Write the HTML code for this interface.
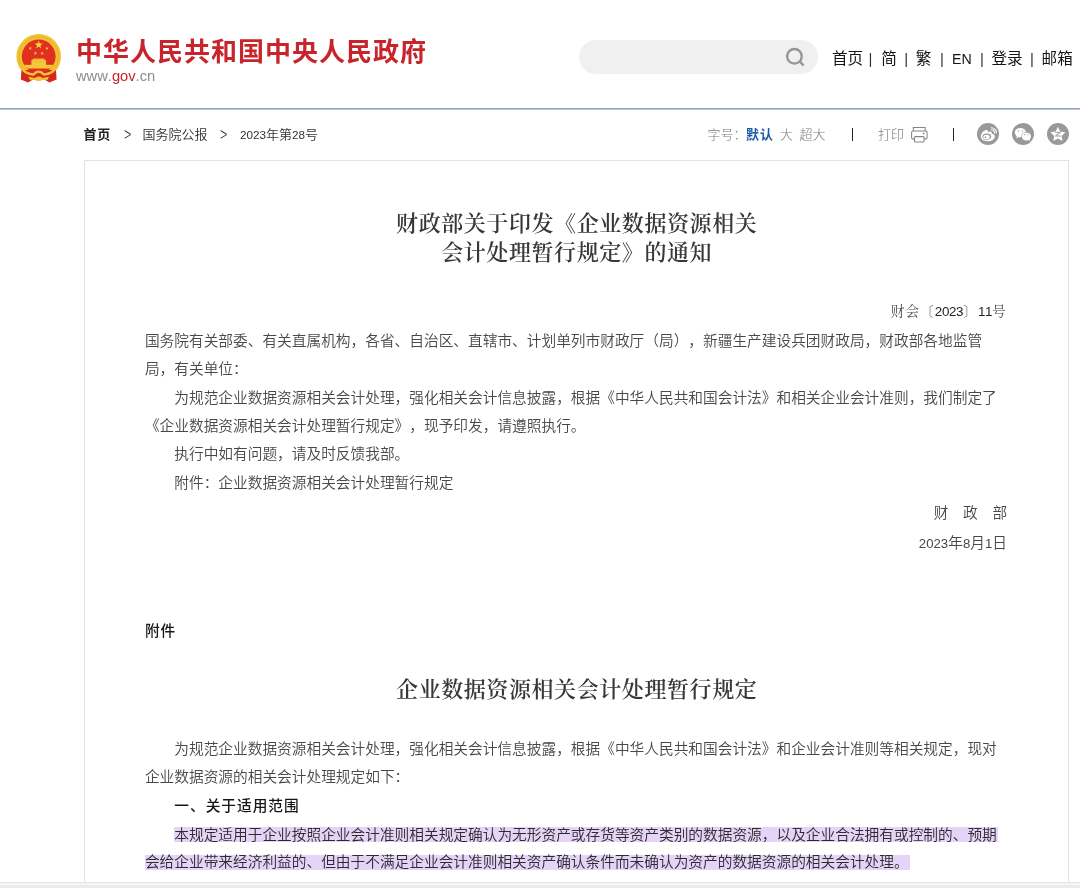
<!DOCTYPE html>
<html lang="zh-CN">
<head>
<meta charset="utf-8">
<title>财政部关于印发《企业数据资源相关会计处理暂行规定》的通知</title>
<style>
html,body{margin:0;padding:0;}
body{width:1080px;height:888px;overflow:hidden;background:#fff;position:relative;
  font-family:"Liberation Sans","Noto Sans CJK SC",sans-serif;color:#333;text-spacing-trim:space-all;font-kerning:none;}
#wrap{position:absolute;left:0;top:0;width:1080px;height:888px;will-change:transform;}
.abs{position:absolute;white-space:nowrap;}
/* header */
#hline{left:0;top:108px;width:1080px;height:2px;background:linear-gradient(#8ba2be 0,#8ba2be 50%,#bccadb 50%,#bccadb 100%);}
#logo{left:16px;top:34px;width:46px;height:50px;}
#sitename{left:76px;top:33px;font-size:26px;line-height:38px;font-weight:bold;color:#c8242b;letter-spacing:1px;}
#siteurl{left:76px;top:66px;font-size:14.7px;line-height:20px;color:#8c8c8c;}
#siteurl b{color:#c8242b;font-weight:normal;}
#search{left:579px;top:40px;width:239px;height:34px;border-radius:17px;background:#f0f0f0;}
#mag{left:784px;top:45px;width:24px;height:24px;}
.nav{top:48.4px;font-size:15.6px;line-height:22px;color:#151515;}
.sep{top:47.6px;font-size:15px;line-height:22px;color:#333;}
/* crumbs */
.crumb{top:126px;font-size:13px;line-height:18px;color:#333;font-weight:350;}
.d{font-size:11.7px;}
.gt{display:inline-block;transform:scale(0.62,1);transform-origin:50% 50%;font-weight:300;font-size:21px;line-height:18px;vertical-align:top;position:relative;top:-1.6px;font-family:"Noto Sans CJK SC",sans-serif;}
.tool{top:126px;font-size:13px;line-height:18px;color:#7a7a7a;font-weight:300;}
.vbar{top:128px;width:1px;height:13px;background:#222;}
.share{top:123px;width:22px;height:22px;}
/* article */
#box{left:84px;top:160px;width:983px;height:740px;border:1px solid #e2e2e2;background:#fff;}
.h1{font-family:"Liberation Serif","Noto Serif CJK SC",serif;font-weight:600;font-size:22px;line-height:30px;color:#383838;
  left:145.2px;width:863px;text-align:center;letter-spacing:0.58px;}
.ln{left:144.9px;width:863.6px;font-size:14.705px;line-height:28px;color:#484848;font-weight:350;}
.ln .n{font-size:13.2px;}
.ln .m{font-size:13.4px;letter-spacing:-0.35px;color:#222;}
.ln.r{text-align:right;}
.ln.i{text-indent:29.41px;}
.ln b{font-weight:500;letter-spacing:0.98px;color:#161616;}
.hl{background:#e6d3f8;height:14.8px;}
#strip{left:0;top:881.5px;width:1080px;height:7px;background:linear-gradient(#e3e3e3 0,#e3e3e3 1.3px,#f5f5f5 1.3px,#f3f4f5 3px,#eaecee 3.4px,#e9ebed 7px);}
</style>
</head>
<body>
<div id="wrap">
<!-- header -->
<svg id="logo" class="abs" viewBox="0 0 46 50">
  <defs><clipPath id="cin"><circle cx="22.7" cy="22.4" r="16.9"/></clipPath>
  <clipPath id="ctop"><rect x="0" y="0" width="46" height="36"/></clipPath></defs>
  <path d="M5.6 33 L39.8 33 L40.6 45.6 L33.4 48.6 L28 45.2 L22.7 46.6 L17.4 45.2 L12 48.6 L4.8 45.6Z" fill="#d8281c"/>
  <circle cx="22.7" cy="22.4" r="22.3" fill="#f2c233" clip-path="url(#ctop)"/>
  <circle cx="22.7" cy="22.4" r="19.6" fill="none" stroke="#e9ab25" stroke-width="0.8" clip-path="url(#ctop)"/>
  <circle cx="22.7" cy="22.4" r="16.9" fill="#e1301f"/>
  <g clip-path="url(#cin)" fill="#f4c838">
    <rect x="4" y="30.8" width="38" height="3.7"/>
    <rect x="15.4" y="27.2" width="14.6" height="3.8"/>
    <path d="M14.6 27.4 L16.6 25.6 L28.8 25.6 L30.8 27.4Z"/>
    <rect x="17" y="24.6" width="11.4" height="1.2"/>
  </g>
  <path d="M5.4 33.2 Q8 39.5 17.5 40.6 Q20 37.6 22.7 37.6 Q25.4 37.6 27.9 40.6 Q37.4 39.5 40 33.2" fill="none" stroke="#f2c233" stroke-width="2.4"/>
  <path d="M12.4 42.8 L19 44 Q22.7 41.2 26.4 44 L33 42.8 L31.4 46 L27 45.4 Q22.7 48.4 18.4 45.4 L14 46Z" fill="#f2c233"/>
  <polygon points="22.70,6.60 23.71,9.51 26.79,9.57 24.34,11.43 25.23,14.38 22.70,12.62 20.17,14.38 21.06,11.43 18.61,9.57 21.69,9.51" fill="#f7d63c"/><polygon points="14.30,12.50 14.72,13.72 16.01,13.74 14.98,14.52 15.36,15.76 14.30,15.02 13.24,15.76 13.62,14.52 12.59,13.74 13.88,13.72" fill="#f7d63c"/><polygon points="31.00,12.50 31.42,13.72 32.71,13.74 31.68,14.52 32.06,15.76 31.00,15.02 29.94,15.76 30.32,14.52 29.29,13.74 30.58,13.72" fill="#f7d63c"/><polygon points="19.40,17.50 19.82,18.72 21.11,18.74 20.08,19.52 20.46,20.76 19.40,20.02 18.34,20.76 18.72,19.52 17.69,18.74 18.98,18.72" fill="#f7d63c"/><polygon points="26.10,17.50 26.52,18.72 27.81,18.74 26.78,19.52 27.16,20.76 26.10,20.02 25.04,20.76 25.42,19.52 24.39,18.74 25.68,18.72" fill="#f7d63c"/>
</svg>
<div id="sitename" class="abs">中华人民共和国中央人民政府</div>
<div id="siteurl" class="abs">www.<b>gov</b>.cn</div>
<div id="search" class="abs"></div>
<svg id="mag" class="abs" viewBox="0 0 24 24"><circle cx="10.45" cy="11.35" r="7.3" fill="none" stroke="#969696" stroke-width="2.4"/><path d="M15.9 16.7 L19 19.8" stroke="#969696" stroke-width="2.4" stroke-linecap="round"/></svg>
<div class="abs nav" style="left:832px">首页</div>
<div class="abs sep" style="left:868.6px">|</div>
<div class="abs nav" style="left:881.3px">简</div>
<div class="abs sep" style="left:904.3px">|</div>
<div class="abs nav" style="left:915.8px">繁</div>
<div class="abs sep" style="left:939.9px">|</div>
<div class="abs nav" style="left:952px;font-size:14.2px">EN</div>
<div class="abs sep" style="left:979.9px">|</div>
<div class="abs nav" style="left:991.4px">登录</div>
<div class="abs sep" style="left:1030.1px">|</div>
<div class="abs nav" style="left:1041.6px">邮箱</div>
<div id="hline" class="abs"></div>

<!-- breadcrumb -->
<div class="abs crumb" style="left:83.5px;font-weight:bold;letter-spacing:0.8px;color:#222">首页</div>
<div class="abs crumb" style="left:121.5px"><span class="gt">&gt;</span></div>
<div class="abs crumb" style="left:142.5px">国务院公报</div>
<div class="abs crumb" style="left:217.7px"><span class="gt">&gt;</span></div>
<div class="abs crumb" style="left:240px"><span class="d">2023</span>年第<span class="d">28</span>号</div>
<div class="abs tool" style="left:707.4px">字号：</div>
<div class="abs tool" style="left:746px;color:#1b58a5;font-weight:bold;letter-spacing:0.9px">默认</div>
<div class="abs tool" style="left:780px">大</div>
<div class="abs tool" style="left:799.5px">超大</div>
<div class="abs vbar" style="left:852px"></div>
<div class="abs tool" style="left:878px">打印</div>
<svg class="abs" style="left:910px;top:126px;width:19px;height:18px" viewBox="0 0 19 18"><g fill="none" stroke="#858585" stroke-width="1.05"><path d="M3.3 5 V1.5 H15.2 V5"/><rect x="1.6" y="4.9" width="15.5" height="8.2" rx="1.6"/><rect x="4.4" y="10.6" width="9.7" height="5.3" rx="1" fill="#fff"/></g><circle cx="13.7" cy="7.4" r="0.85" fill="#777"/></svg>
<div class="abs vbar" style="left:953px"></div>
<svg class="abs share" style="left:977px" viewBox="0 0 22 22"><circle cx="11" cy="11" r="11" fill="#999"/><path d="M10.3 7.1 C8 6 3.8 9.8 3.8 13.5 C3.8 16.4 7 18.2 10.6 18.2 C14.6 18.2 17.8 16 17.8 13.4 C17.8 11.7 16.2 10.7 14.7 10.7 C15.1 9.5 14.6 8.5 13.3 8.5 C12.5 8.5 11.5 8.9 10.9 9.3 C11.1 8.4 10.9 7.5 10.3 7.1Z" fill="#fff"/><ellipse cx="9.8" cy="13.6" rx="4.4" ry="3.1" fill="#999"/><ellipse cx="9.5" cy="13.9" rx="3.2" ry="2.2" fill="#fff"/><ellipse cx="8.7" cy="14.2" rx="1" ry="0.7" fill="#999"/><path d="M14.4 6.7 a3.2 3.2 0 0 1 3.2 3.2" fill="none" stroke="#fff" stroke-width="1.1" stroke-linecap="round"/><path d="M14.2 4.7 a5.2 5.2 0 0 1 5.2 5.2" fill="none" stroke="#fff" stroke-width="1.1" stroke-linecap="round"/></svg>
<svg class="abs share" style="left:1012px" viewBox="0 0 22 22"><circle cx="11" cy="11" r="11" fill="#999"/><ellipse cx="8.4" cy="9.6" rx="5.6" ry="4.7" fill="#fff"/><path d="M5 12.6 L4.4 15.2 L7.8 13.8Z" fill="#fff"/><ellipse cx="14.4" cy="13.4" rx="5" ry="4.4" fill="#999"/><ellipse cx="14.4" cy="13.4" rx="4.6" ry="4" fill="#fff"/><path d="M16 16.6 L18 18 L17.6 15.4Z" fill="#fff"/><circle cx="6.5" cy="7.9" r="0.65" fill="#999"/><circle cx="10.5" cy="7.8" r="0.65" fill="#999"/><circle cx="12.7" cy="11.7" r="0.6" fill="#999"/><circle cx="16" cy="11.7" r="0.6" fill="#999"/></svg>
<svg class="abs share" style="left:1047px" viewBox="0 0 22 22"><circle cx="11" cy="11" r="11" fill="#999"/><polygon points="10.90,3.80 13.19,8.54 18.41,9.26 14.61,12.91 15.54,18.09 10.90,15.60 6.26,18.09 7.19,12.91 3.39,9.26 8.61,8.54" fill="#fff"/><path d="M8.2 9.3 H13.6 L8.4 13 H13.8" fill="none" stroke="#999" stroke-width="1"/></svg>

<!-- article -->
<div id="box" class="abs"></div>
<div class="abs h1" style="top:208.7px">财政部关于印发《企业数据资源相关</div>
<div class="abs h1" style="top:237.7px">会计处理暂行规定》的通知</div>

<div class="abs ln r" style="top:298px;left:143.2px;font-family:'Liberation Sans','Noto Serif CJK SC',serif;font-weight:400;font-size:13.7px;letter-spacing:1px">财会〔<span class="m">2023</span>〕<span class="m">11</span>号</div>
<div class="abs ln" style="top:326.6px">国务院有关部委、有关直属机构，各省、自治区、直辖市、计划单列市财政厅（局），新疆生产建设兵团财政局，财政部各地监管</div>
<div class="abs ln" style="top:355px">局，有关单位：</div>
<div class="abs ln i" style="top:383.5px">为规范企业数据资源相关会计处理，强化相关会计信息披露，根据《中华人民共和国会计法》和相关企业会计准则，我们制定了</div>
<div class="abs ln" style="top:412px">《企业数据资源相关会计处理暂行规定》，现予印发，请遵照执行。</div>
<div class="abs ln i" style="top:440.4px">执行中如有问题，请及时反馈我部。</div>
<div class="abs ln i" style="top:469px">附件：企业数据资源相关会计处理暂行规定</div>
<div class="abs ln r" style="top:499.4px;left:143.6px">财　政　部</div>
<div class="abs ln r" style="top:528.8px;left:143.4px"><span class="n">2023</span>年<span class="n">8</span>月<span class="n">1</span>日</div>
<div class="abs ln" style="top:617px"><b>附件</b></div>
<div class="abs h1" style="top:675px">企业数据资源相关会计处理暂行规定</div>
<div class="abs hl" style="left:174.4px;top:827.4px;width:823.4px"></div>
<div class="abs hl" style="left:145px;top:854.8px;width:764.8px"></div>
<div class="abs ln i" style="top:734.5px">为规范企业数据资源相关会计处理，强化相关会计信息披露，根据《中华人民共和国会计法》和企业会计准则等相关规定，现对</div>
<div class="abs ln" style="top:762.7px">企业数据资源的相关会计处理规定如下：</div>
<div class="abs ln i" style="top:791.8px"><b>一、关于适用范围</b></div>
<div class="abs ln i" style="top:821px;color:#2c2c2c">本规定适用于企业按照企业会计准则相关规定确认为无形资产或存货等资产类别的数据资源，以及企业合法拥有或控制的、预期</div>
<div class="abs ln" style="top:848px;color:#2c2c2c">会给企业带来经济利益的、但由于不满足企业会计准则相关资产确认条件而未确认为资产的数据资源的相关会计处理。</div>
<div id="strip" class="abs"></div>
</div>
</body>
</html>
